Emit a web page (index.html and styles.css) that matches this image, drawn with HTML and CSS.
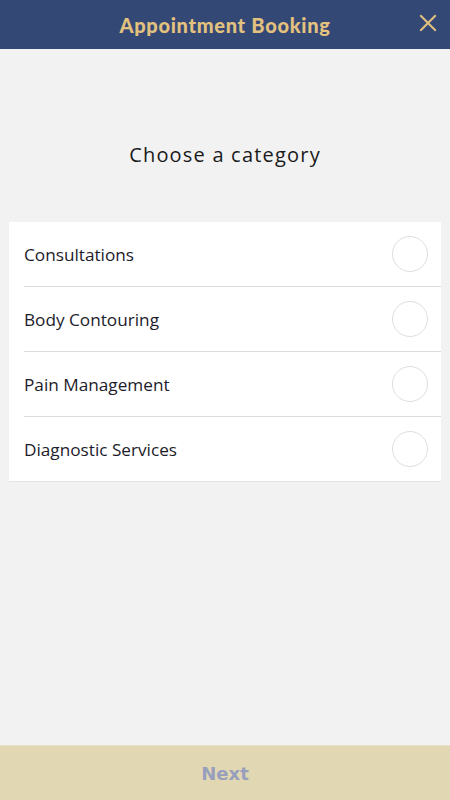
FILE: index.html
```html
<!DOCTYPE html>
<html>
<head>
<meta charset="utf-8">
<link rel="stylesheet" href="styles.css">
</head>
<body>
<div class="app">
  <header class="topbar">
    <h1 class="title">Appointment Booking</h1>
    <button class="close" aria-label="Close">
      <svg width="18" height="18" viewBox="0 0 18 18"><path d="M2 2L16 16M16 2L2 16" stroke="#e3c17e" stroke-width="2" stroke-linecap="square"/></svg>
    </button>
  </header>
  <main class="content">
    <h2 class="heading">Choose a category</h2>
    <ul class="list">
      <li class="item"><span class="label">Consultations</span><span class="radio"></span></li>
      <li class="item"><span class="label">Body Contouring</span><span class="radio"></span></li>
      <li class="item"><span class="label">Pain Management</span><span class="radio"></span></li>
      <li class="item"><span class="label">Diagnostic Services</span><span class="radio"></span></li>
    </ul>
  </main>
  <footer class="footer">
    <button class="next">Next</button>
  </footer>
</div>
</body>
</html>
```
FILE: styles.css
```css
* { box-sizing: border-box; }
html, body { margin: 0; padding: 0; }
body { background: #f2f2f2; font-family: "Open Sans", sans-serif; }
.app { width: 450px; height: 800px; display: flex; flex-direction: column; }
.topbar {
  height: 49px; background: #344876; display: flex; align-items: center; justify-content: center;
  position: relative; flex-shrink: 0;
}
.title {
  margin: 0; font-family: "Lato", sans-serif; font-weight: 900; font-size: 20px; color: #e3c17e;
  letter-spacing: 0.7px;
}
.close {
  position: absolute; right: 13px; top: 14px; background: none; border: 0; padding: 0; width: 18px; height: 18px;
  display: flex;
}
.content { flex: 1; padding: 0 9px; }
.heading {
  margin: 86px 0 0; height: 40px; text-align: center; font-weight: 400; font-size: 20px; letter-spacing: 1.2px;
  color: #1a1a1a; line-height: 40px;
}
.list { list-style: none; margin: 47px 0 0; padding: 0; background: #fff; border-bottom: 1px solid #e2e2e2; }
.item {
  height: 65px; display: flex; align-items: center; justify-content: space-between;
  margin-left: 15px; padding-right: 13px; border-bottom: 1px solid #dcdcdc;
}
.item:last-child { border-bottom: 0; height: 64px; }
.label { font-size: 17.2px; color: #1c1c2a; }
.radio { width: 36px; height: 36px; border-radius: 50%; border: 1px solid #dedede; background: #fff; }
.footer {
  height: 55px; background: #e1d7b3; border-top: 1px solid #e8e1c6; display: flex; align-items: center;
  justify-content: center; flex-shrink: 0;
}
.next {
  background: none; border: 0; font-family: "DejaVu Sans", sans-serif; font-weight: bold; font-size: 18px;
  color: #979fbc; padding: 0;
}
```
